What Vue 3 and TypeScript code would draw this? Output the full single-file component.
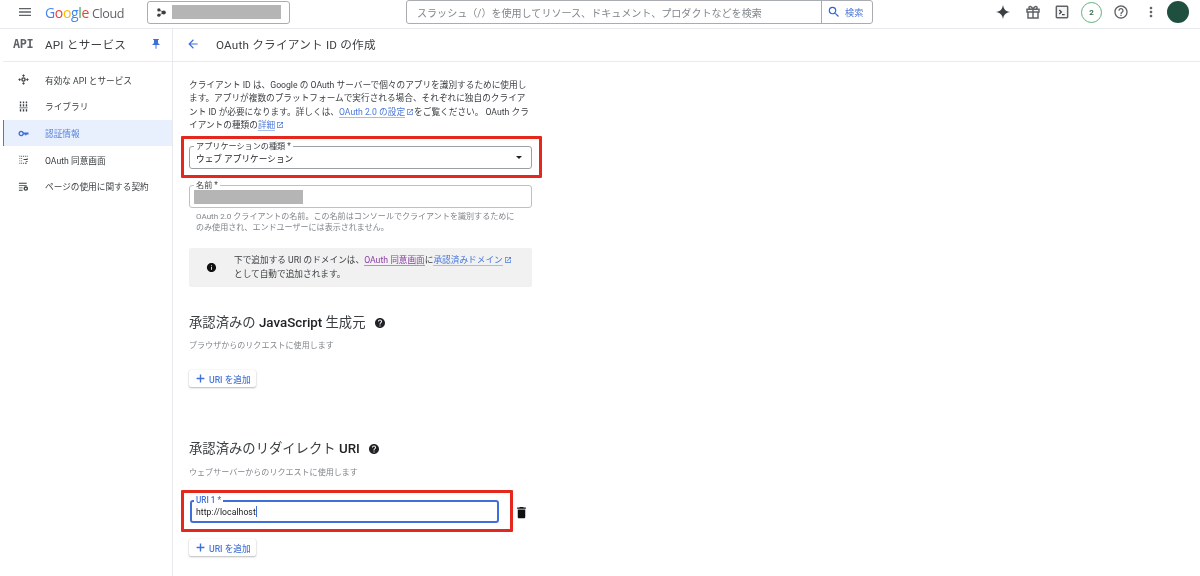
<script setup lang="ts">
const ICON = {
  api: 'M12 .5l3 3-3 3-3-3zM12 17.500l3 3-3 3-3-3zM3.500 9l3 3-3 3-3-3zM20.500 9l3 3-3 3-3-3zM12 7a5 5 0 1 1 0 10 5 5 0 0 1 0-10zm0 3a2 2 0 1 0 0 4 2 2 0 0 0 0-4z',
  library: 'M4 1h3v4H4zM10.500 1h3v4h-3zM17 1h3v4h-3zM4 7h3v5H4zM10.500 7h3v5h-3zM17 7h3v5h-3zM3 14h18v2H3zM4 18h3v5H4zM10.500 18h3v5h-3zM17 18h3v5h-3z',
  key: 'M12.650 10C11.830 7.670 9.610 6 7 6c-3.310 0-6 2.690-6 6s2.690 6 6 6c2.610 0 4.830-1.670 5.650-4H15l2 3 2-3h4v-4H12.650zM7 15c-1.650 0-3-1.350-3-3s1.350-3 3-3 3 1.350 3 3-1.350 3-3 3z',
  consent: 'M3 4h2v2H3zM7 4h2v2H7zM11 4h2v2h-2zM15 4h2v2h-2zM19 4h2v2h-2zM3 9h2v2H3zM7 9h2v2H7zM3 14h2v2H3zM7 14h2v2H7zM3 19h2v2H3zM7 19h2v2H7zM11 19h2v2h-2zM19 9h2v2h-2zM12 11h9v2h-9zM17 15h4v2h-4zM15 19h4v2h-4z',
  terms: 'M2 4h17v2H2zM2 9h17v2H2zM2 14h8v2H2zM2 19h8v2H2zM17 11.500a5 5 0 1 1 0 10 5 5 0 0 1 0-10zm0 3a2 2 0 1 0 0 4 2 2 0 0 0 0-4z',
}
const navItems = [
  { label: '有効な API とサービス', icon: ICON.api, active: false },
  { label: 'ライブラリ', icon: ICON.library, active: false },
  { label: '認証情報', icon: ICON.key, active: true },
  { label: 'OAuth 同意画面', icon: ICON.consent, active: false },
  { label: 'ページの使用に関する契約', icon: ICON.terms, active: false },
]
const openNew = 'M19 19H5V5h7V3H5c-1.110 0-2 .900-2 2v14c0 1.100.890 2 2 2h14c1.100 0 2-.900 2-2v-7h-2v7zM14 3v2h3.590l-9.830 9.830 1.410 1.410L19 6.410V10h2V3h-7z'
const help = 'M12 2C6.480 2 2 6.480 2 12s4.480 10 10 10 10-4.480 10-10S17.520 2 12 2zm1 17h-2v-2h2v2zm2.070-7.750l-.900.920C13.450 12.900 13 13.500 13 15h-2v-.500c0-1.100.450-2.100 1.170-2.830l1.240-1.260c.370-.360.590-.860.590-1.410 0-1.100-.900-2-2-2s-2 .900-2 2H8c0-2.210 1.790-4 4-4s4 1.790 4 4c0 .880-.360 1.680-.930 2.250z'
const add = 'M20.500 13.500h-7v7h-3v-7h-7v-3h7v-7h3v7h7v3z'
</script>

<template>
  <div class="page">
    <header class="top">
      <svg class="menu" viewBox="0 0 24 24"><path d="M3 18h18v-2H3v2zm0-5h18v-2H3v2zm0-7v2h18V6H3z" /></svg>
      <div class="logo"><span class="g-b">G</span><span class="g-r">o</span><span class="g-y">o</span><span class="g-b">g</span><span class="g-g">l</span><span class="g-r">e</span><span class="cloud">Cloud</span></div>
      <div class="picker">
        <svg class="hub" viewBox="0 0 12 12"><circle cx="2.500" cy="2.500" r="2.200" /><circle cx="2.500" cy="9.500" r="2.200" /><circle cx="9" cy="6" r="2.800" /><path d="M2.500 2.500 9 6 2.500 9.500" fill="none" stroke="#3c4043" /></svg>
        <div class="redact redact-picker"></div>
      </div>
      <div class="search">
        <div class="search-text">スラッシュ（/）を使用してリソース、ドキュメント、プロダクトなどを検索</div>
        <div class="search-btn">
          <svg viewBox="0 0 24 24"><path d="M15.500 14h-.790l-.280-.270A6.471 6.471 0 0 0 16 9.500 6.500 6.500 0 1 0 9.500 16c1.610 0 3.090-.590 4.230-1.570l.270.280v.790l5 4.990L20.490 19l-4.990-5zm-6 0C7.010 14 5 11.990 5 9.500S7.010 5 9.500 5 14 7.010 14 9.500 11.990 14 9.500 14z" /></svg>
          <span>検索</span>
        </div>
      </div>
      <div class="actions">
        <svg class="act sparkle" viewBox="0 0 24 24"><path d="M12 1c1 7 4 10 11 11-7 1-10 4-11 11-1-7-4-10-11-11 7-1 10-4 11-11z" /></svg>
        <svg class="act" viewBox="0 0 24 24"><path d="M3 8h18v4H3zM4.500 12v9h15v-9M12 8v13M12 8C10 2.500 5.500 2.500 6 6c.2 1.300 3.500 2 6 2 2.500 0 5.800-.7 6-2 .5-3.500-4-3.500-6 2z" fill="none" stroke="#5f6368" stroke-width="2.200" /></svg>
        <svg class="act" viewBox="0 0 24 24"><rect x="3.500" y="3.500" width="17" height="17" rx="1" fill="#f4f4f4" stroke="#5f6368" stroke-width="2.200" /><path d="M8 9l3 3-3 3M12 16h4" fill="none" stroke="#3c4043" stroke-width="2" /></svg>
        <div class="badge">2</div>
        <svg class="act" viewBox="0 0 24 24"><path d="M11 18h2v-2h-2v2zm1-16C6.480 2 2 6.480 2 12s4.480 10 10 10 10-4.480 10-10S17.520 2 12 2zm0 18c-4.410 0-8-3.590-8-8s3.590-8 8-8 8 3.590 8 8-3.590 8-8 8zm0-14c-2.210 0-4 1.790-4 4h2c0-1.100.900-2 2-2s2 .900 2 2c0 2-3 1.750-3 5h2c0-2.250 3-2.500 3-5 0-2.210-1.790-4-4-4z" /></svg>
        <svg class="act" viewBox="0 0 24 24"><path d="M12 8c1.100 0 2-.900 2-2s-.900-2-2-2-2 .900-2 2 .900 2 2 2zm0 2c-1.100 0-2 .900-2 2s.900 2 2 2 2-.900 2-2-.900-2-2-2zm0 6c-1.100 0-2 .900-2 2s.900 2 2 2 2-.900 2-2-.900-2-2-2z" /></svg>
        <div class="avatar"></div>
      </div>
    </header>

    <div class="body">
      <aside class="side">
        <div class="side-head">
          <span class="api-mark">API</span>
          <span class="side-title">API とサービス</span>
          <svg class="pin" viewBox="0 0 24 24"><path d="M16 9V4h1c.550 0 1-.450 1-1s-.450-1-1-1H7c-.550 0-1 .450-1 1s.450 1 1 1h1v5c0 1.660-1.340 3-3 3v2h5.970v7l1 1 1-1v-7H19v-2c-1.660 0-3-1.340-3-3z" /></svg>
        </div>
        <nav class="nav">
          <div v-for="item in navItems" :key="item.label" class="nav-item" :class="{ active: item.active }">
            <svg viewBox="0 0 24 24"><path :d="item.icon" /></svg>
            <span>{{ item.label }}</span>
          </div>
        </nav>
      </aside>

      <main class="main">
        <div class="title-bar">
          <svg viewBox="0 0 24 24"><path d="M20 11H7.830l5.590-5.590L12 4l-8 8 8 8 1.410-1.410L7.830 13H20v-2z" /></svg>
          <h1>OAuth クライアント ID の作成</h1>
        </div>

        <div class="content">
          <p class="intro">クライアント ID は、Google の OAuth サーバーで個々のアプリを識別するために使用し<br />ます。アプリが複数のプラットフォームで実行される場合、それぞれに独自のクライア<br />ント ID が必要になります。詳しくは、<a class="link">OAuth 2.0 の設定</a><svg class="ext" viewBox="0 0 24 24"><path :d="openNew" /></svg>をご覧ください。 OAuth クラ<br />イアントの種類の<a class="link">詳細</a><svg class="ext" viewBox="0 0 24 24"><path :d="openNew" /></svg></p>

          <div class="red red-select">
            <div class="field">
              <label>アプリケーションの種類 *</label>
              <span class="value">ウェブ アプリケーション</span>
              <span class="caret"></span>
            </div>
          </div>

          <div class="field field-name">
            <label>名前 *</label>
            <div class="redact redact-name"></div>
          </div>
          <p class="hint">OAuth 2.0 クライアントの名前。この名前はコンソールでクライアントを識別するために<br />のみ使用され、エンドユーザーには表示されません。</p>

          <div class="info">
            <svg viewBox="0 0 24 24"><path d="M12 2C6.480 2 2 6.480 2 12s4.480 10 10 10 10-4.480 10-10S17.520 2 12 2zm1 15h-2v-6h2v6zm0-8h-2V7h2v2z" /></svg>
            <p>下で追加する URI のドメインは、<a class="link visited">OAuth 同意画面</a>に<a class="link">承認済みドメイン</a><svg class="ext" viewBox="0 0 24 24"><path :d="openNew" /></svg><br />として自動で追加されます。</p>
          </div>

          <h2 class="sec-one"><span>承認済みの <b>JavaScript</b> 生成元</span><svg viewBox="0 0 24 24"><path :d="help" /></svg></h2>
          <p class="sub">ブラウザからのリクエストに使用します</p>
          <button class="add-btn btn-one"><svg viewBox="0 0 24 24"><path :d="add" /></svg>URI を追加</button>

          <h2 class="sec-two"><span>承認済みのリダイレクト <b>URI</b></span><svg viewBox="0 0 24 24"><path :d="help" /></svg></h2>
          <p class="sub sub-two">ウェブサーバーからのリクエストに使用します</p>

          <div class="uri-row">
            <div class="red red-uri">
              <div class="field focused">
                <label>URI 1 *</label>
                <span class="value uri">http://localhost<i class="cursor"></i></span>
              </div>
            </div>
            <svg class="trash" viewBox="0 0 24 24"><path d="M6 19c0 1.100.900 2 2 2h8c1.100 0 2-.900 2-2V7H6v12zM19 4h-3.500l-1-1h-5l-1 1H5v2h14V4z" /></svg>
          </div>
          <button class="add-btn btn-two"><svg viewBox="0 0 24 24"><path :d="add" /></svg>URI を追加</button>
        </div>
      </main>
    </div>
  </div>
</template>

<style>
html, body { margin: 0; background: #fff; overflow: hidden; }
</style>

<style scoped>
.page { width: 1200px; height: 576px; overflow: hidden; display: flex; flex-direction: column; font-family: Roboto, "Noto Sans CJK JP", sans-serif; font-size: 8.67px; color: #3c4043; filter: blur(0.4px); }
p, h1, h2 { margin: 0; font-weight: 400; }

.top { height: 24px; padding-bottom: 4px; flex: none; display: flex; align-items: center; border-bottom: 1px solid #e8eaed; }
.menu { width: 16px; height: 16px; margin-left: 16.500px; fill: #5f6368; flex: none; }
.logo { width: 102px; margin-left: 12.500px; flex: none; font-family: "Open Sans", sans-serif; font-size: 14px; letter-spacing: -0.35px; }
.g-b { color: #4285f4; } .g-r { color: #ea4335; } .g-y { color: #fbbc05; } .g-g { color: #34a853; }
.cloud { color: #5f6368; margin-left: 3px; font-size: 12.600px; letter-spacing: -0.4px; }
.picker { width: 143px; height: 23px; box-sizing: border-box; border: 1px solid #a9acb0; border-radius: 3px; display: flex; align-items: center; flex: none; }
.hub { width: 9px; height: 9px; margin-left: 9px; fill: #3c4043; flex: none; }
.redact { background: #b5b5b5; }
.redact-picker { width: 109px; height: 14px; margin-left: 6px; }
.search { width: 467px; height: 24px; box-sizing: border-box; margin-left: 116px; border: 1px solid #a9acb0; border-radius: 3px; display: flex; flex: none; align-items: center; }
.search-text { flex: 1; padding-left: 10px; color: #80868b; font-size: 10.050px; white-space: nowrap; }
.search-btn { width: 51px; height: 100%; border-left: 1px solid #a9acb0; display: flex; align-items: center; color: #4a78d8; font-size: 9.200px; box-sizing: border-box; }
.search-btn svg { width: 14px; height: 14px; margin-left: 5px; margin-right: 4px; fill: #2f67d0; }
.actions { flex: 1; display: flex; align-items: center; padding-left: 122px; }
.act { width: 16px; height: 16px; fill: #5f6368; flex: none; margin-right: 13.500px; }
.sparkle { fill: #3c4043; }
.badge { width: 21px; height: 21px; margin-right: 11px; margin-left: -2.500px; flex: none; box-sizing: border-box; border: 1.300px solid #5fb07a; border-radius: 50%; display: flex; align-items: center; justify-content: center; font-size: 8px; font-weight: 700; color: #3c6b4f; }
.avatar { width: 22px; height: 22px; border-radius: 50%; background: #1f4f3f; margin-left: -5px; flex: none; }

.body { flex: 1; display: flex; min-height: 0; }
.side { width: 169px; margin-left: 3px; flex: none; border-right: 1px solid #e8eaed; }
.side-head { height: 29px; padding-bottom: 3px; border-bottom: 1px solid #e8eaed; display: flex; align-items: center; }
.api-mark { width: 22px; margin-left: 10px; font-family: "DejaVu Sans Mono", monospace; font-size: 11.800px; font-weight: 700; color: #5f6368; flex: none; letter-spacing: -0.3px; }
.side-title { margin-left: 10px; font-size: 11.670px; color: #3c4043; letter-spacing: 0.2px; flex: 1; }
.pin { width: 12px; height: 12px; fill: #3f6fd8; margin-right: 10px; flex: none; }
.nav { padding-top: 4.500px; }
.nav-item { height: 26.670px; display: flex; align-items: center; box-sizing: border-box; padding-left: 14px; border-left: 1px solid transparent; }
.nav-item svg { width: 11px; height: 11px; fill: #3c4043; flex: none; margin-right: 16px; }
.nav-item.active { background: #e8f0fe; border-left: 1.500px solid #4a78d8; color: #5a82dc; }
.nav-item.active svg { fill: #3f6fd8; }

.main { flex: 1; min-width: 0; }
.title-bar { height: 29px; padding: 0 0 3px 13px; border-bottom: 1px solid #e8eaed; display: flex; align-items: center; }
.title-bar svg { width: 14px; height: 14px; fill: #3f6fd8; flex: none; }
.title-bar h1 { font-size: 11.670px; margin-left: 16px; letter-spacing: 0.2px; color: #3c4043; }

.content { width: 343px; padding: 17px 0 0 16px; }
.intro { line-height: 13.330px; white-space: nowrap; }
.link { color: #4a78d8; border-bottom: 1px solid #a6bdec; }
.link.visited { color: #8b3fa8; border-bottom-color: #b48cc8; }
.ext { width: 8px; height: 8px; fill: #4a78d8; vertical-align: -1px; margin-left: 1px; }

.red { border: 3px solid #e5281d; border-radius: 1px; box-sizing: border-box; }
.red-select { margin: 4px -10px 0 -8px; padding: 7px 7px 6px 5px; height: 42px; }
.field { height: 23px; box-sizing: border-box; border: 1px solid #9aa0a6; border-radius: 3px; position: relative; display: flex; align-items: center; padding-left: 6px; }
.field label { position: absolute; left: 4px; top: -5px; padding: 0 2px; background: #fff; font-size: 8.150px; line-height: 9px; color: #3c4043; }
.value { font-size: 8.67px; padding-top: 1px; color: #202124; flex: 1; }
.caret { width: 0; height: 0; border-left: 3.500px solid transparent; border-right: 3.500px solid transparent; border-top: 3.500px solid #202124; margin-right: 9px; }
.field-name { margin-top: 7px; border-color: #bdc1c6; align-items: flex-start; padding-left: 4px; }
.redact-name { width: 109px; height: 14px; margin-top: 4px; }
.hint { margin: 2.500px 0 0 7px; line-height: 11px; color: #80868b; font-size: 8.050px; white-space: nowrap; }
.info { margin-top: 15.500px; height: 39px; background: #f1f1f1; border-radius: 2px; display: flex; align-items: center; }
.info > svg { width: 11px; height: 11px; margin-left: 17px; flex: none; fill: #111; }
.info p { margin-left: 17px; line-height: 13.330px; }

h2 { font-size: 13.330px; line-height: 20px; color: #3c4043; display: flex; align-items: center; }
h2 b { font-weight: 500; color: #202124; }
h2 svg { width: 12px; height: 12px; margin-left: 8px; fill: #202124; flex: none; }
.sec-one { margin-top: 26px; }
.sec-two { margin-top: 52px; }
.sub { margin-top: 7px; line-height: 12px; font-size: 8.050px; color: #80868b; }
.sub-two { margin-top: 8px; }
.add-btn { display: flex; align-items: center; width: 67px; height: 17px; padding: 0 0 0 6px; border: 0; border-radius: 2px; background: #fff; box-shadow: 0 1px 2px rgba(60, 64, 67, 0.35), 0 0 1px rgba(60, 64, 67, 0.2); font: 500 8.67px Roboto, "Noto Sans CJK JP", sans-serif; color: #4a78d8; }
.add-btn svg { width: 11px; height: 11px; fill: #3f6fd8; margin-right: 3px; flex: none; }
.btn-one { margin-top: 18px; }
.btn-two { margin-top: 7px; }
.uri-row { margin: 11px -10px 0 -8px; display: flex; align-items: center; }
.red-uri { width: 332px; height: 42px; padding: 7px 11px 6px 6px; flex: none; }
.focused { border: 2px solid #3f6fd8; padding-left: 4px; }
.focused label { color: #3f6fd8; left: 2px; top: -6px; font-weight: 500; }
.uri { color: #202124; padding-top: 0; letter-spacing: 0.05px; }
.cursor { display: inline-block; width: 1px; height: 11px; background: #3f6fd8; vertical-align: -2px; }
.trash { width: 15px; height: 15px; margin: 2px 0 0 1px; flex: none; fill: #111; }
</style>
